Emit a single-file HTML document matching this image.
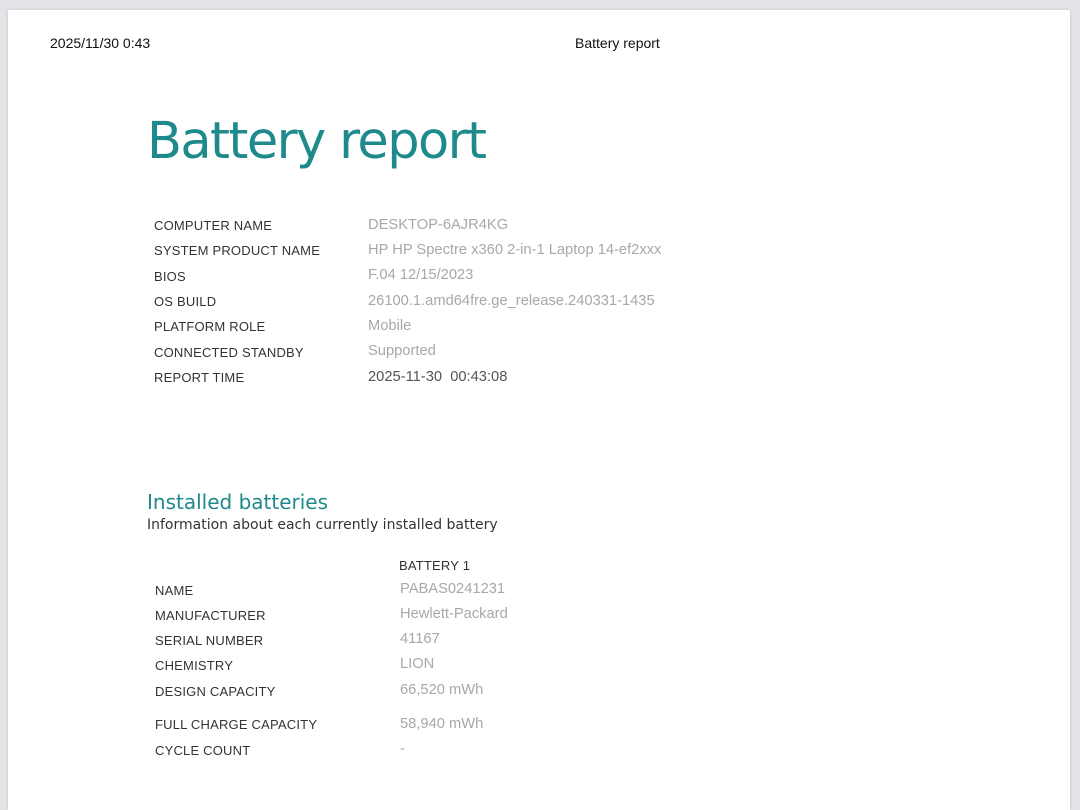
<!DOCTYPE html>
<html><head><meta charset="utf-8"><style>
html,body{margin:0;padding:0;}
body{width:1080px;height:800px;background:#e4e4e8;position:relative;overflow:hidden;font-family:"Liberation Sans",sans-serif;}
.page{position:absolute;left:8px;top:10px;width:1062px;height:800px;background:#fff;box-shadow:0 0 3px rgba(0,0,0,.15);}
.a{position:absolute;white-space:nowrap;}
.hd{font-size:14px;color:#111;}
.t{font-family:"DejaVu Sans","Liberation Sans",sans-serif;color:#1e8a8c;}
.l{font-size:13px;color:#333;letter-spacing:0.2px;}
.v{font-size:14.7px;color:#a8a8a8;}
</style></head><body>
<div class="a hd" style="left:50px;top:35px">2025/11/30 0:43</div>
<div class="a hd" style="left:575px;top:35px">Battery report</div>
<div class="page" style="z-index:-1"></div>
<div class="a t" style="left:147px;top:112px;font-size:51px;letter-spacing:-1.6px;">Battery report</div>

<div class="a l" style="left:154px;top:218px">COMPUTER NAME</div>
<div class="a l" style="left:154px;top:243px">SYSTEM PRODUCT NAME</div>
<div class="a l" style="left:154px;top:269px">BIOS</div>
<div class="a l" style="left:154px;top:294px">OS BUILD</div>
<div class="a l" style="left:154px;top:319px">PLATFORM ROLE</div>
<div class="a l" style="left:154px;top:345px">CONNECTED STANDBY</div>
<div class="a l" style="left:154px;top:370px">REPORT TIME</div>

<div class="a v" style="left:368px;top:217px">DESKTOP-6AJR4KG</div>
<div class="a v" style="left:368px;top:242px">HP HP Spectre x360 2-in-1 Laptop 14-ef2xxx</div>
<div class="a v" style="left:368px;top:267px">F.04 12/15/2023</div>
<div class="a v" style="left:368px;top:293px">26100.1.amd64fre.ge_release.240331-1435</div>
<div class="a v" style="left:368px;top:318px">Mobile</div>
<div class="a v" style="left:368px;top:343px">Supported</div>
<div class="a v" style="left:368px;top:369px;color:#555">2025-11-30&nbsp; 00:43:08</div>

<div class="a t" style="left:147px;top:490px;font-size:20px;">Installed batteries</div>
<div class="a" style="left:147px;top:517px;color:#333;font-family:'DejaVu Sans',sans-serif;font-size:14px">Information about each currently installed battery</div>

<div class="a l" style="left:399px;top:558px">BATTERY 1</div>
<div class="a l" style="left:155px;top:583px">NAME</div>
<div class="a l" style="left:155px;top:608px">MANUFACTURER</div>
<div class="a l" style="left:155px;top:633px">SERIAL NUMBER</div>
<div class="a l" style="left:155px;top:658px">CHEMISTRY</div>
<div class="a l" style="left:155px;top:684px">DESIGN CAPACITY</div>
<div class="a l" style="left:155px;top:717px">FULL CHARGE CAPACITY</div>
<div class="a l" style="left:155px;top:743px">CYCLE COUNT</div>

<div class="a v" style="left:400px;top:581px">PABAS0241231</div>
<div class="a v" style="left:400px;top:606px">Hewlett-Packard</div>
<div class="a v" style="left:400px;top:631px">41167</div>
<div class="a v" style="left:400px;top:656px">LION</div>
<div class="a v" style="left:400px;top:682px">66,520 mWh</div>
<div class="a v" style="left:400px;top:716px">58,940 mWh</div>
<div class="a v" style="left:400px;top:741px">-</div>
</body></html>
